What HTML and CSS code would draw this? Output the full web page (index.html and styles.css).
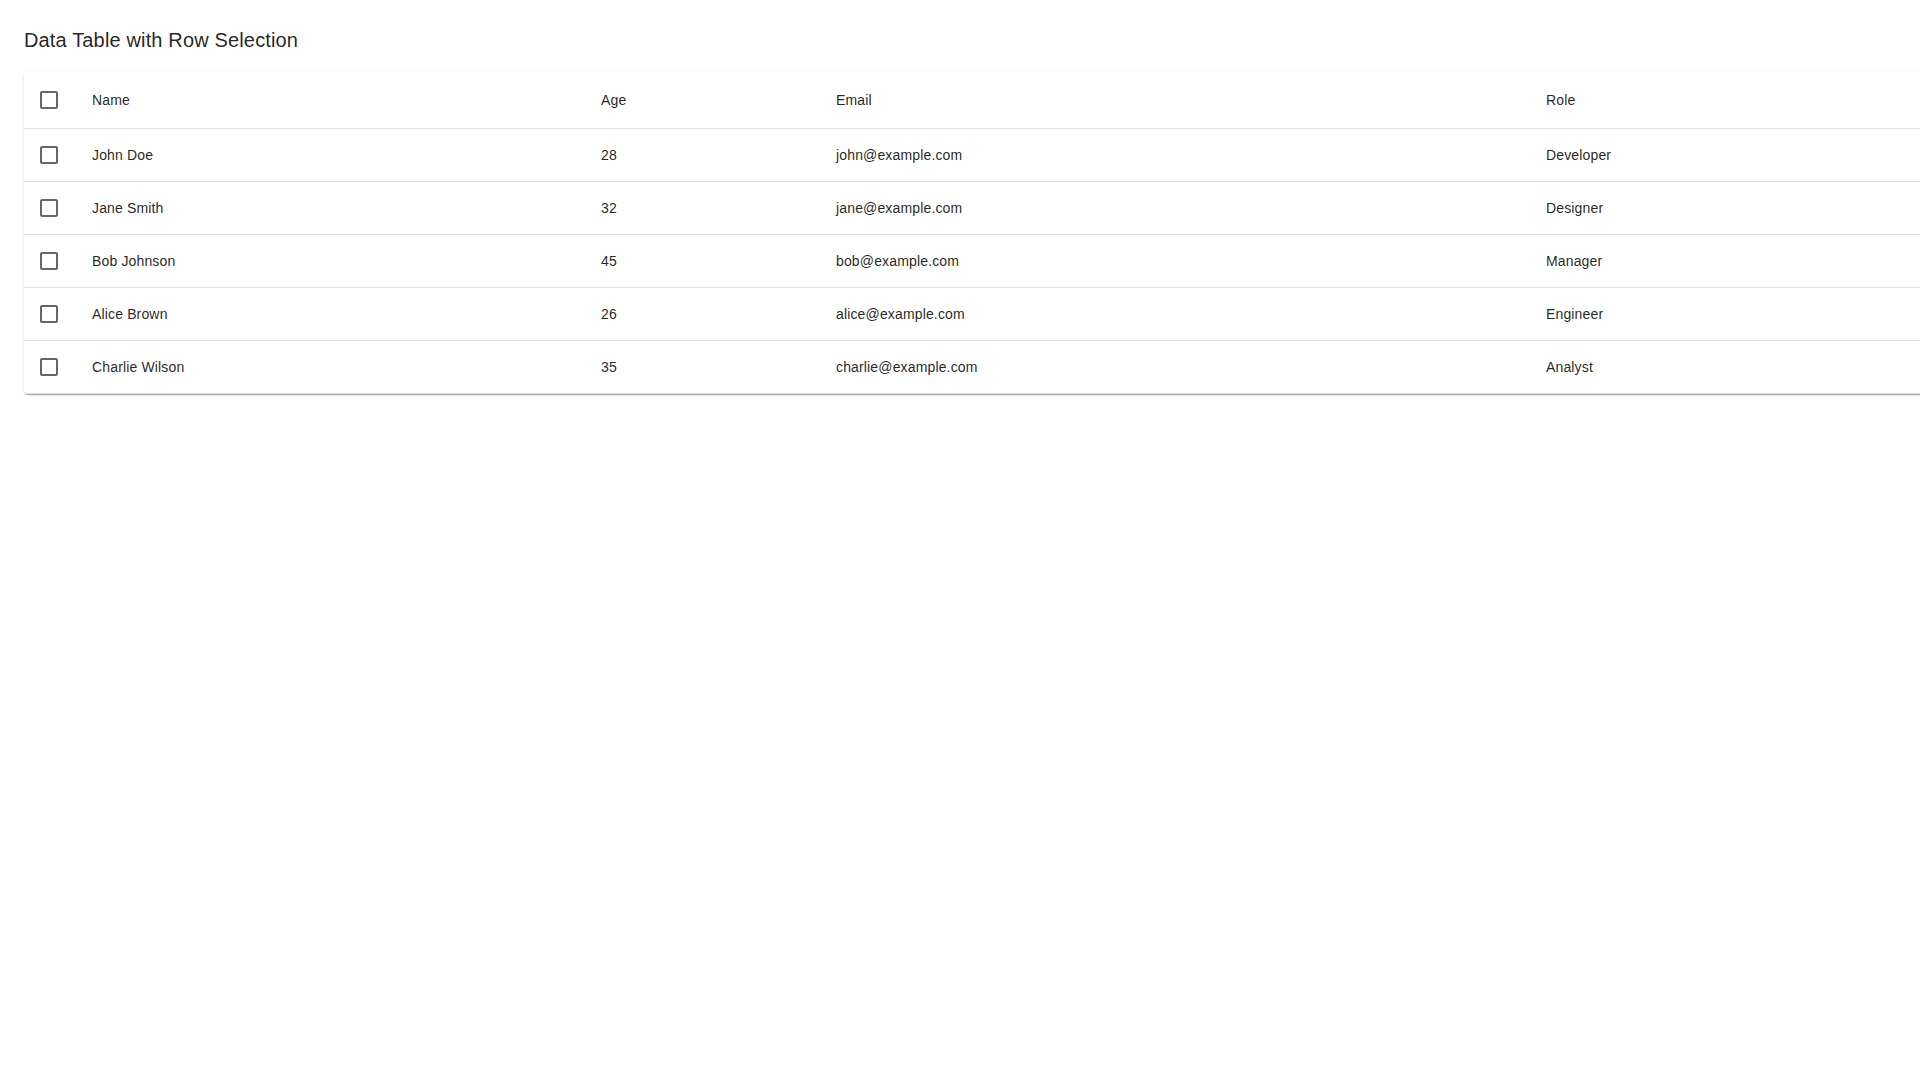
FILE: index.html
```html
<!DOCTYPE html>
<html lang="en">
<head>
  <meta charset="UTF-8">
  <meta name="viewport" content="width=device-width, initial-scale=1.0">
  <title>Data Table with Row Selection</title>
  <link rel="stylesheet" href="styles.css">
</head>
<body>

<h1 class="page-title">Data Table with Row Selection</h1>

<div class="table-card">
  <table class="data-table">
    <colgroup>
      <col class="col-check">
      <col class="col-name">
      <col class="col-age">
      <col class="col-email">
      <col class="col-role">
    </colgroup>
    <thead>
      <tr>
        <th class="check-cell">
          <svg class="box" viewBox="0 0 24 24"><path d="M19 5v14H5V5h14m0-2H5c-1.11 0-2 .9-2 2v14c0 1.1.89 2 2 2h14c1.1 0 2-.9 2-2V5c0-1.1-.9-2-2-2z"/></svg>
        </th>
        <th>Name</th>
        <th>Age</th>
        <th>Email</th>
        <th>Role</th>
      </tr>
    </thead>
    <tbody>
      <tr>
        <td class="check-cell"><svg class="box" viewBox="0 0 24 24"><path d="M19 5v14H5V5h14m0-2H5c-1.11 0-2 .9-2 2v14c0 1.1.89 2 2 2h14c1.1 0 2-.9 2-2V5c0-1.1-.9-2-2-2z"/></svg></td>
        <td>John Doe</td>
        <td>28</td>
        <td>john@example.com</td>
        <td>Developer</td>
      </tr>
      <tr>
        <td class="check-cell"><svg class="box" viewBox="0 0 24 24"><path d="M19 5v14H5V5h14m0-2H5c-1.11 0-2 .9-2 2v14c0 1.1.89 2 2 2h14c1.1 0 2-.9 2-2V5c0-1.1-.9-2-2-2z"/></svg></td>
        <td>Jane Smith</td>
        <td>32</td>
        <td>jane@example.com</td>
        <td>Designer</td>
      </tr>
      <tr>
        <td class="check-cell"><svg class="box" viewBox="0 0 24 24"><path d="M19 5v14H5V5h14m0-2H5c-1.11 0-2 .9-2 2v14c0 1.1.89 2 2 2h14c1.1 0 2-.9 2-2V5c0-1.1-.9-2-2-2z"/></svg></td>
        <td>Bob Johnson</td>
        <td>45</td>
        <td>bob@example.com</td>
        <td>Manager</td>
      </tr>
      <tr>
        <td class="check-cell"><svg class="box" viewBox="0 0 24 24"><path d="M19 5v14H5V5h14m0-2H5c-1.11 0-2 .9-2 2v14c0 1.1.89 2 2 2h14c1.1 0 2-.9 2-2V5c0-1.1-.9-2-2-2z"/></svg></td>
        <td>Alice Brown</td>
        <td>26</td>
        <td>alice@example.com</td>
        <td>Engineer</td>
      </tr>
      <tr>
        <td class="check-cell"><svg class="box" viewBox="0 0 24 24"><path d="M19 5v14H5V5h14m0-2H5c-1.11 0-2 .9-2 2v14c0 1.1.89 2 2 2h14c1.1 0 2-.9 2-2V5c0-1.1-.9-2-2-2z"/></svg></td>
        <td>Charlie Wilson</td>
        <td>35</td>
        <td>charlie@example.com</td>
        <td>Analyst</td>
      </tr>
    </tbody>
  </table>
</div>

</body>
</html>
```

FILE: styles.css
```css
html {
  overflow: hidden;
}
body {
  margin: 0;
  padding: 24px;
  background-color: #fff;
  color: rgba(0, 0, 0, 0.87);
  font-family: "Liberation Sans", Arial, sans-serif;
}
.page-title {
  margin: 0 0 16px;
  font-size: 20px;
  font-weight: 400;
  line-height: 32px;
  letter-spacing: 0.0075em;
}
.table-card {
  width: 1926px;
  background-color: #fff;
  border-radius: 4px;
  box-shadow: 0px 2px 1px -1px rgba(0, 0, 0, 0.2), 0px 1px 1px 0px rgba(0, 0, 0, 0.14), 0px 1px 3px 0px rgba(0, 0, 0, 0.12);
}
.data-table {
  width: 100%;
  table-layout: fixed;
  border-collapse: separate;
  border-spacing: 0;
}
.col-check { width: 52px; }
.col-name { width: 509px; }
.col-age { width: 235px; }
.col-email { width: 710px; }
.col-role { width: 420px; }
th, td {
  box-sizing: border-box;
  height: 53px;
  padding: 0 16px;
  text-align: left;
  vertical-align: middle;
  font-size: 14px;
  font-weight: 400;
  letter-spacing: 0.01071em;
  line-height: 20px;
  border-bottom: 1px solid rgb(224, 224, 224);
  white-space: nowrap;
}
th {
  height: 57px;
}
.check-cell {
  padding: 0 0 0 13px;
}
.box {
  display: block;
  width: 24px;
  height: 24px;
  fill: rgba(0, 0, 0, 0.6);
}
```
